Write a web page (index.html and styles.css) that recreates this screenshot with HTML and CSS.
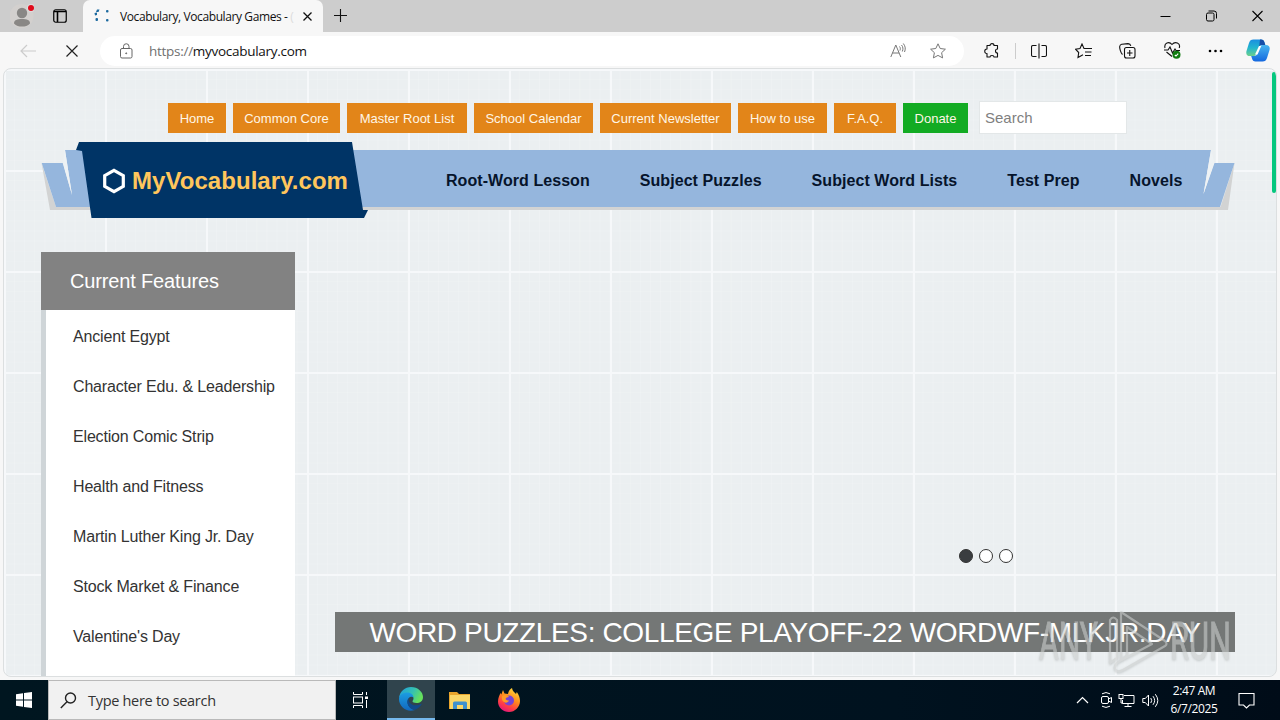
FILE: index.html
```html
<!DOCTYPE html>
<html lang="en">
<head>
    <meta charset="UTF-8">
    <meta name="viewport" content="width=device-width, initial-scale=1.0">
    <title>Vocabulary, Vocabulary Games - MyVocabulary.com</title>
    <link rel="stylesheet" href="styles.css">
</head>
<body>

    <div class="tab-strip">
        <div class="strip-left">
            <svg class="profile" width="24" height="28" viewBox="0 0 24 28">
                <circle cx="11.500" cy="14" r="12" fill="#d3d0ce"/>
                <circle cx="12" cy="11" r="5.200" fill="#898785"/>
                <path d="M4 21.500c0-3.500 3-4.500 8-4.500s8 1 8 4.500c-2 2.500-5 3-8 3s-6-.5-8-3z" fill="#898785"/>
                <circle cx="21" cy="6" r="4" fill="#ddd"/>
                <circle cx="21" cy="6" r="3" fill="#e00b1c"/>
            </svg>
            <svg class="tab-menu" width="14" height="14" viewBox="0 0 14 14">
                <rect x=".75" y=".75" width="12.500" height="12.500" rx="2" fill="none" stroke="#000" stroke-width="1.200"/>
                <path d="M1 2.500h12M4.500 3v10" stroke="#000" stroke-width="1.600"/>
            </svg>
        </div>
        <div class="tab">
            <svg width="16" height="14" viewBox="0 0 16 14">
                <g fill="#1d6a9f">
                    <path d="M3 .5h2.500L4.500 3H2zM.5 4L3 3.500v2.500L1 6.500z"/>
                    <rect x="1.500" y="9" width="2.500" height="3" rx="1"/>
                    <rect x="12" y="1" width="2.500" height="2.500" rx="1"/>
                    <rect x="12" y="10" width="2.500" height="2.500" rx="1"/>
                </g>
            </svg>
            <span class="tab-title">Vocabulary, Vocabulary Games - <i>(</i></span>
            <svg width="9" height="9" viewBox="0 0 9 9"><path d="M.5.5l8 8M8.500.5l-8 8" stroke="#111" stroke-width="1.300"/></svg>
        </div>
        <svg class="new-tab" width="14" height="14" viewBox="0 0 14 14"><path d="M6.500 0v13M0 6.500h13" stroke="#111" stroke-width="1.100"/></svg>
        <div class="win-buttons">
            <svg width="11" height="12" viewBox="0 0 11 12"><path d="M.5 6.500h10" stroke="#000"/></svg>
            <svg width="11" height="12" viewBox="0 0 11 12" fill="none" stroke="#000">
                <rect x=".5" y="3" width="7.500" height="8" rx="1.500"/>
                <path d="M2.500 1h5.500q2.500 0 2.500 2.500v5"/>
            </svg>
            <svg width="11" height="12" viewBox="0 0 11 12"><path d="M.5 1l10 10M10.500 1l-10 10" stroke="#000" stroke-width="1.100"/></svg>
        </div>
    </div>

    <div class="toolbar">
        <svg class="back" width="16" height="14" viewBox="0 0 16 14"><path d="M7 1L1 7l6 6M1 7h15" fill="none" stroke="#ccc" stroke-width="1.200"/></svg>
        <svg class="stop" width="12" height="12" viewBox="0 0 12 12"><path d="M.5.5l11 11M11.500.5l-11 11" stroke="#222" stroke-width="1.200"/></svg>
        <div class="address">
            <svg width="13" height="16" viewBox="0 0 13 16" fill="none" stroke="#666">
                <rect x=".5" y="5.500" width="11.500" height="9.500" rx="1.500"/>
                <path d="M3.500 5.500V3.500a2.750 2.750 0 0 1 5.500 0v2"/>
                <circle cx="6.200" cy="10.300" r=".5" fill="#666"/>
            </svg>
            <span class="url"><span>https://</span>myvocabulary.com</span>
            <svg width="16" height="15" viewBox="0 0 16 15" fill="none" stroke="#777">
                <path d="M.8 14L5.800 2l5 12M2.500 10h6.600M9.500 3.500c1 1.200 1 2.500.5 4M11.500 2c1.700 2 1.800 4 .8 6.500M13.300.5c2.300 3 2.400 5.500 1.200 8.500"/>
            </svg>
            <svg width="16" height="16" viewBox="0 0 16 16" fill="none" stroke="#777" stroke-linejoin="round">
                <path d="M8 .8l2.200 4.700 5.200.7-3.800 3.500 1 5.200L8 12.400l-4.600 2.500 1-5.200L.6 6.200l5.200-.7z"/>
            </svg>
        </div>
        <div class="tools">
            <svg width="16" height="16" viewBox="0 0 16 16" fill="none" stroke="#111" stroke-width="1.100">
                <path d="M3 2.500h3c0-2.500 4-2.500 4 0h3.500V6c-2.700 0-2.700 4 0 4v4H10c0-2-4-2-4 0H3V10.500c-3 0-3-4.500 0-4.500z" stroke-linejoin="round" transform="translate(1 0)"/>
            </svg>
            <i class="divider"></i>
            <svg width="16" height="16" viewBox="0 0 16 16" fill="none" stroke="#111" stroke-width="1.100">
                <path d="M5.500 2.500H2q-1.500 0-1.500 1.500v8q0 1.500 1.500 1.500h3.500M10.500 2.500H14q1.500 0 1.500 1.500v8q0 1.500-1.500 1.500h-3.500M8 .5v15"/>
            </svg>
            <svg width="17" height="16" viewBox="0 0 17 16" fill="none" stroke="#111" stroke-width="1.100">
                <path d="M10.500 5.500H9L7 1 5 5.500l-4.500.7L3.700 9.500 3 14.500l5-2.700M10 5.500h7M10 9h6.500M10 12.500h6"/>
            </svg>
            <svg width="17" height="16" viewBox="0 0 17 16" fill="none" stroke="#111" stroke-width="1.100">
                <rect x="5.500" y="4.500" width="10.500" height="10.500" rx="2"/>
                <path d="M10.750 7v6M8 10h5.500M3.500 11.500C1.500 9.500.5 5 .7 3.500 1 1.500 2 1.500 3 1.200L9 .6c1.500 0 2.500.8 2.800 2.200"/>
            </svg>
            <svg width="17" height="17" viewBox="0 0 17 17" fill="none" stroke="#111" stroke-width="1.100">
                <path d="M1 6C-.2 1 5-1 8 2.500 11-1 17 1 15.200 6M0 8h4l2-3 2.500 6L11 7l1 1.500h4M2.500 10l5.500 4.500"/>
                <circle cx="12.500" cy="12.800" r="4" fill="#107c10" stroke="none"/>
                <path d="M10.800 13l1.200 1 2.200-2.400" stroke="#fff"/>
            </svg>
            <svg width="15" height="4" viewBox="0 0 15 4"><circle cx="2" cy="2" r="1.300"/><circle cx="7.500" cy="2" r="1.300"/><circle cx="13" cy="2" r="1.300"/></svg>
        </div>
        <svg class="copilot" width="24" height="23" viewBox="0 0 24 23">
            <defs>
                <linearGradient id="cpA" x1="0" y1="0" x2="0" y2="1"><stop offset="0" stop-color="#1b8ee0"/><stop offset=".5" stop-color="#22b5cf"/><stop offset="1" stop-color="#6cd08c"/></linearGradient>
                <linearGradient id="cpB" x1="0" y1="0" x2="0" y2="1"><stop offset="0" stop-color="#47b5f0"/><stop offset="1" stop-color="#1468df"/></linearGradient>
            </defs>
            <path d="M7.500.5H15c2 0 3 1 3.500 3l.8 2.500H16c-2 0-2.500 1-3 2.500L11 14c-.7 2-1.500 3-3.500 3H4c-3 0-4.300-2-3.500-5L3 4C3.800 1.500 5 .5 7.500.5z" fill="url(#cpA)"/>
            <path d="M14 .5h1c2 0 3 1 3.500 3l.8 2.500H16c-1.500 0-2.300.7-2.800 2z" fill="#174ea8"/>
            <path d="M16.500 6H20c3 0 4.300 2 3.500 5L21 19c-.8 2.500-2 3.500-4.500 3.500H9.500c-2 0-3-1-3.500-3L5.200 17H8c2 0 2.800-1 3.500-3l2-5.500c.5-1.600 1.200-2.500 3-2.500z" fill="url(#cpB)"/>
            <path d="M13 7h2.300L11.500 15.500H9z" fill="#fff"/>
        </svg>
    </div>

    <div class="viewport">
        <div class="top-row">
            <nav class="top-links">
                <a>Home</a>
                <a>Common Core</a>
                <a>Master Root List</a>
                <a>School Calendar</a>
                <a>Current Newsletter</a>
                <a>How to use</a>
                <a>F.A.Q.</a>
                <a class="donate">Donate</a>
            </nav>
            <div class="search">Search</div>
        </div>

        <header class="ribbon">
            <svg class="ribbon-shape" width="1194" height="76" viewBox="0 0 1194 76">
                <path d="M.5 21L9 68h1178l6.500-47-14 44H15z" fill="#d2d3d3"/>
                <path d="M.7 21h21L31 53 24 8h1146l-7.500 44L1173 21h20.500L1179 65H15z" fill="#95b6dd"/>
                <path d="M22 21l2-13 7 45zM1170 8l3.500 13-11 31z" fill="#eef2f4"/>
                <path d="M38 0h273l11 68h5l-4 8H50.500L41 9l-6-1z" fill="#003466"/>
            </svg>
            <div class="logo">
                <svg width="24" height="26" viewBox="0 0 24 26"><path d="M12 2.300l9.300 5.300v10.800L12 23.700l-9.300-5.300V7.600z" fill="none" stroke="#fff" stroke-width="3.200"/></svg>
                <span>MyVocabulary.com</span>
            </div>
            <nav class="main-nav">
                <a>Root-Word Lesson</a>
                <a>Subject Puzzles</a>
                <a>Subject Word Lists</a>
                <a>Test Prep</a>
                <a>Novels</a>
            </nav>
        </header>

        <main class="content">
            <aside class="features">
                <h2>Current Features</h2>
                <ul>
                    <li>Ancient Egypt</li>
                    <li>Character Edu. &amp; Leadership</li>
                    <li>Election Comic Strip</li>
                    <li>Health and Fitness</li>
                    <li>Martin Luther King Jr. Day</li>
                    <li>Stock Market &amp; Finance</li>
                    <li>Valentine's Day</li>
                </ul>
            </aside>
            <section class="slider">
                <div class="dots"><i class="active"></i><i></i><i></i></div>
                <div class="caption">WORD PUZZLES: COLLEGE PLAYOFF-22 WORDWF-MLKJR.DAY</div>
            </section>
        </main>

        <div class="scroll-thumb"></div>
    </div>

    <svg class="watermark" width="200" height="70" viewBox="0 0 200 70">
        <g class="wm-text">
            <text x="3" y="51" textLength="59" lengthAdjust="spacingAndGlyphs">ANY</text>
            <text x="134" y="51" textLength="61" lengthAdjust="spacingAndGlyphs">RUN</text>
        </g>
        <g fill="none" stroke="#c9cccb" stroke-width="2.200" stroke-linejoin="round">
            <path d="M85 4l44 29q3 3 0 5L87 62q-6 3-8-1-1-4 3-7l34-18-25-17v28l-6 5z"/>
            <path d="M74 12q3-5 7 0v38l-7 5z"/>
        </g>
    </svg>

    <div class="taskbar">
        <div class="start">
            <svg width="16" height="16" viewBox="0 0 16 16" fill="#fff"><path d="M0 2.300l7-1v6.200H0zM8 1.100L16 0v7.500H8zM0 8.500h7v6.200l-7-1zM8 8.500h8V16l-8-1.100z"/></svg>
        </div>
        <div class="task-search">
            <svg width="17" height="17" viewBox="0 0 17 17" fill="none" stroke="#222" stroke-width="1.400"><circle cx="10.500" cy="6" r="5"/><path d="M7 9.700L.8 16"/></svg>
            <span>Type here to search</span>
        </div>
        <div class="task-item view">
            <svg width="17" height="16" viewBox="0 0 17 16" fill="none" stroke="#fff">
                <path d="M1.500 0v2.500h9V0M1.500 16v-2.500h9V16M14.500 0v3M14.500 8v8"/>
                <rect x="1.500" y="5" width="9" height="6"/>
                <path d="M13 4.500h3v2.500h-3z" fill="#fff" stroke="none"/>
            </svg>
        </div>
        <div class="task-item open">
            <svg width="24" height="24" viewBox="0 0 24 24">
                <defs>
                    <linearGradient id="edA" x1="0" y1="0" x2="1" y2=".4"><stop offset="0" stop-color="#1d9be2"/><stop offset=".6" stop-color="#35c1b1"/><stop offset="1" stop-color="#66e05c"/></linearGradient>
                    <linearGradient id="edB" x1="0" y1="0" x2="0" y2="1"><stop offset="0" stop-color="#1b9de2"/><stop offset="1" stop-color="#1267bd"/></linearGradient>
                </defs>
                <path d="M0 11C1 4 6 0 12 0c7 0 12 5 12 10 0 4-3 6-6.500 6-2.500 0-4-.8-4-1.700 0-.6 1-1 1-2.800C14.500 9 12 7 8.500 7 4 7 1 9 0 11z" fill="url(#edA)"/>
                <path d="M0 12c0-4 4-6.500 8.500-6.500 3.500 0 6 2.500 6 5-2-2-6-.5-6 4C8.500 19 12 22.500 16 23 8 26 0 20 0 12z" fill="url(#edB)"/>
                <path d="M9.500 11c-3 5 0 10.500 6 12 3-1 5.500-3 7-5.500.3-.7-.2-.8-.6-.5-5 3-13 1-12.400-6z" fill="#114a8b"/>
            </svg>
        </div>
        <div class="task-item">
            <svg width="22" height="19" viewBox="0 0 22 19">
                <path d="M0 1h8l2 2h11v15H0z" fill="#e9a52c"/>
                <path d="M1 4h20v14H1z" fill="#fbd768"/>
                <path d="M4 18v-6q0-1.500 1.500-1.500h11q1.500 0 1.500 1.500v6h-4v-4H8v4z" fill="#3f91cf"/>
            </svg>
        </div>
        <div class="task-item">
            <svg width="24" height="24" viewBox="0 0 24 24">
                <defs><linearGradient id="ff" x1=".8" y1="0" x2=".3" y2="1"><stop offset="0" stop-color="#ffdf3c"/><stop offset=".45" stop-color="#ff8a1d"/><stop offset=".75" stop-color="#ff3d45"/><stop offset="1" stop-color="#e3167d"/></linearGradient></defs>
                <path d="M6 2l1.500 3.500L11 6c.5-3 2-5 4-6 .3 3 2.500 4 4 6l.8-2C22 7 23 10 23 13c0 6-5 11-11 11S1 19.500 1 13.500C1 10 2.500 7 3.500 5l.8 1.500z" fill="url(#ff)"/>
                <circle cx="12" cy="12.500" r="5" fill="#7543d6"/>
                <path d="M5 8c3-2 6-1 7 1-2 0-3 .7-3.500 2 1 1.500 2 1.500 3.500 1.500-1 2-3 3-5 1.500C5 13 4.500 10 5 8z" fill="#ff9b25"/>
            </svg>
        </div>
        <div class="tray">
            <svg width="13" height="8" viewBox="0 0 13 8"><path d="M1 7l5.500-5.500L12 7" fill="none" stroke="#fff" stroke-width="1.200"/></svg>
            <svg width="12" height="16" viewBox="0 0 12 16" fill="none" stroke="#fff"><rect x="1.500" y="4.500" width="7" height="7" rx="1.500"/><path d="M8.500 7l3-1.500v5l-3-1.500M2 1.800q4-2.500 8 0M2 14.200q4 2.500 8 0"/></svg>
            <svg width="17" height="15" viewBox="0 0 17 15" fill="none" stroke="#fff"><path d="M6 2.500h10v8H4.500V7M10 10.500v3M6.500 13.500h7"/><rect x="1" y="1.500" width="4" height="4"/><path d="M3 5.500V10h2"/></svg>
            <svg width="17" height="15" viewBox="0 0 17 15" fill="none" stroke="#fff"><path d="M.8 5.500h2.500L6.500 2v11L3.300 9.500H.8zM8.800 5q1.800 2.500 0 5M11 3.200q3.300 4.300 0 8.600M13.300 1.200q5 6.300 0 12.600"/></svg>
            <div class="clock"><span>2:47 AM</span><span>6/7/2025</span></div>
            <svg width="17" height="17" viewBox="0 0 17 17"><path d="M1 1.500h15v11.500h-4.500L8.500 16l-3-3H1z" fill="none" stroke="#fff" stroke-width="1.100"/></svg>
        </div>
    </div>

</body>
</html>
```
FILE: styles.css
```css
* { margin: 0; padding: 0; box-sizing: border-box; }

body {
    width: 1280px;
    height: 720px;
    display: flex;
    flex-direction: column;
    overflow: hidden;
    position: relative;
    background: #f7f7f7;
    font-family: "Liberation Sans", Arial, sans-serif;
}

svg { display: block; flex: none; }

/* --- BROWSER TABS --- */
.tab-strip {
    height: 32px;
    display: flex;
    background: #cdcdcd;
    font-family: "Open Sans", "Noto Sans", sans-serif;
}

.strip-left {
    width: 83px;
    display: flex;
    padding: 2px 0 0 10px;
}

.tab-menu { margin: 7px 0 0 19px; }

.tab {
    width: 240px;
    display: flex;
    align-items: center;
    padding: 0 11px 0 11px;
    background: #f7f7f7;
    border-radius: 7px 7px 0 0;
}

.tab-title {
    width: 177px;
    margin: 0 6px 0 10px;
    white-space: nowrap;
    font-size: 12px;
    letter-spacing: -0.4px;
    color: #111;
}

.tab-title i { font-style: normal; color: #ddd; }

.new-tab { margin: 9px 0 0 11px; }

.win-buttons {
    display: flex;
    gap: 35px;
    margin: 10px 17px 0 auto;
}

/* --- TOOLBAR --- */
.toolbar {
    height: 37px;
    display: flex;
    align-items: center;
    background: #f7f7f7;
}

.back { margin-left: 20px; }
.stop { margin-left: 30px; }

.address {
    width: 864px;
    height: 30px;
    display: flex;
    align-items: center;
    margin-left: 22px;
    padding: 0 18px 0 20px;
    border-radius: 15px;
    background: #fff;
}

.url {
    flex: 1;
    margin-left: 16px;
    font-family: "Open Sans", "Noto Sans", sans-serif;
    font-size: 13.5px;
    letter-spacing: -0.28px;
    color: #111;
}

.url span { color: #707070; }

.address svg:last-child { margin-left: 24px; }

.tools {
    width: 240px;
    display: flex;
    align-items: center;
    justify-content: space-between;
    margin-left: 19px;
}

.divider { width: 1px; height: 16px; background: #ccc; margin: 0 -12px; }

.copilot { margin-left: 23px; }

/* --- PAGE --- */
.viewport {
    width: 1274px;
    height: 609px;
    margin: -1px 0 0 3px;
    position: relative;
    overflow: hidden;
    border: 1px solid #dcdfe0;
    border-radius: 8px;
    background-color: #ebeff1;
    background-image:
        linear-gradient(90deg, #f6f8fa 2px, transparent 2px),
        linear-gradient(#f6f8fa 2px, transparent 2px),
        linear-gradient(90deg, rgba(255, 255, 255, 0.14) 1px, transparent 1px),
        linear-gradient(rgba(255, 255, 255, 0.1) 1px, transparent 1px);
    background-size: 101px 101px, 101px 101px, 10.1px 10.1px, 10.1px 10.1px;
    background-position: 0 0, 0 0, 0 0, 0 0;
}

.top-row {
    display: flex;
    padding: 32px 0 0 164px;
}

.top-links {
    display: grid;
    grid-template-columns: 58px 107px 120px 119px 131px 89px 62px 65px;
    gap: 7px;
    padding-top: 2px;
}

.top-links a {
    height: 30px;
    line-height: 31px;
    background: #e28519;
    color: #fff6e6;
    font-size: 13px;
    text-align: center;
    white-space: nowrap;
}

.top-links .donate { background: #12ab23; }

.search {
    width: 148px;
    height: 33px;
    margin-left: 11px;
    padding-left: 5px;
    border: 1px solid #e3e7e8;
    background: #fff;
    color: #808080;
    font-size: 15px;
    line-height: 32px;
}

/* --- RIBBON HEADER --- */
.ribbon {
    width: 1194px;
    height: 76px;
    display: flex;
    align-items: center;
    position: relative;
    margin: 8px 0 0 37px;
}

.ribbon-shape { position: absolute; left: 0; top: 0; }

.logo {
    width: 344px;
    display: flex;
    align-items: center;
    gap: 6px;
    position: relative;
    padding: 1px 0 0 61px;
    color: #ffc65c;
    font-size: 24px;
    font-weight: bold;
    letter-spacing: 0.05px;
}

.main-nav {
    display: flex;
    gap: 50px;
    position: relative;
    margin-left: 61px;
    padding-top: 2px;
    color: #06142b;
    font-size: 16px;
    font-weight: bold;
    letter-spacing: 0.06px;
    white-space: nowrap;
}

/* --- CONTENT --- */
.content {
    display: flex;
    gap: 40px;
    margin: 34px 0 0 37px;
}

.features { width: 254px; }

.features h2 {
    height: 58px;
    padding-left: 29px;
    background: #828282;
    color: #fff;
    font-size: 20px;
    font-weight: normal;
    letter-spacing: -0.15px;
    line-height: 58px;
}

.features ul {
    height: 367px;
    padding-top: 1px;
    border-left: 5px solid #cfd5d8;
    background: #fff;
    list-style: none;
}

.features li {
    height: 50px;
    padding-left: 27px;
    color: #333;
    font-size: 16px;
    letter-spacing: -0.17px;
    line-height: 51px;
    white-space: nowrap;
}

.slider {
    width: 900px;
    height: 400px;
    display: flex;
    flex-direction: column;
    justify-content: flex-end;
}

.dots {
    display: flex;
    gap: 6px;
    margin: 0 0 49px 624px;
}

.dots i {
    width: 14px;
    height: 14px;
    border: 1px solid #333;
    border-radius: 50%;
    background: #fff;
}

.dots .active { background: #3a3d40; }

.caption {
    height: 40px;
    background: #747776;
    color: #fff;
    font-size: 28px;
    letter-spacing: -0.35px;
    line-height: 41px;
    text-align: center;
    white-space: nowrap;
}

.scroll-thumb {
    position: absolute;
    top: 3px;
    right: 0;
    width: 4px;
    height: 121px;
    border-radius: 3px;
    background: #06c77e;
}

.watermark {
    position: absolute;
    left: 1036px;
    top: 608px;
    opacity: 0.6;
    filter: drop-shadow(0 1px 1px rgba(110, 115, 115, 0.5));
}

.wm-text {
    fill: #c9cccb;
    stroke: #c9cccb;
    stroke-width: 1px;
    font-family: Roboto, sans-serif;
    font-size: 51px;
}

/* --- TASKBAR --- */
.taskbar {
    height: 40px;
    display: flex;
    margin-top: auto;
    background: linear-gradient(90deg, #001620, #00121f 70%, #000c18);
    font-family: "Open Sans", "Noto Sans", sans-serif;
}

.start, .task-item {
    width: 48px;
    display: flex;
    align-items: center;
    justify-content: center;
}

.start { padding-bottom: 1px; }

.task-search {
    width: 288px;
    display: flex;
    align-items: center;
    gap: 11px;
    padding-left: 11px;
    border: 1px solid #b9b9b9;
    background: #f1f1f1;
    color: #333;
    font-size: 14.5px;
    letter-spacing: -0.3px;
}

.task-item { width: 49px; }

.task-item.view { width: 51px; padding-right: 2px; }

.task-item.open {
    width: 48px;
    background: #30444d;
    border-bottom: 2px solid #76b9ed;
}

.tray {
    display: flex;
    align-items: center;
    gap: 7px;
    margin-left: auto;
    padding-right: 25px;
}

.tray > svg:first-child { margin-right: 5px; }

.tray > svg:nth-child(2) { margin: 0 -1px 0 -1px; }

.clock {
    width: 50px;
    display: flex;
    flex-direction: column;
    align-items: center;
    margin: 0 12px 0 3px;
    color: #fff;
    font-size: 12px;
    line-height: 18px;
    letter-spacing: -0.4px;
}
```
